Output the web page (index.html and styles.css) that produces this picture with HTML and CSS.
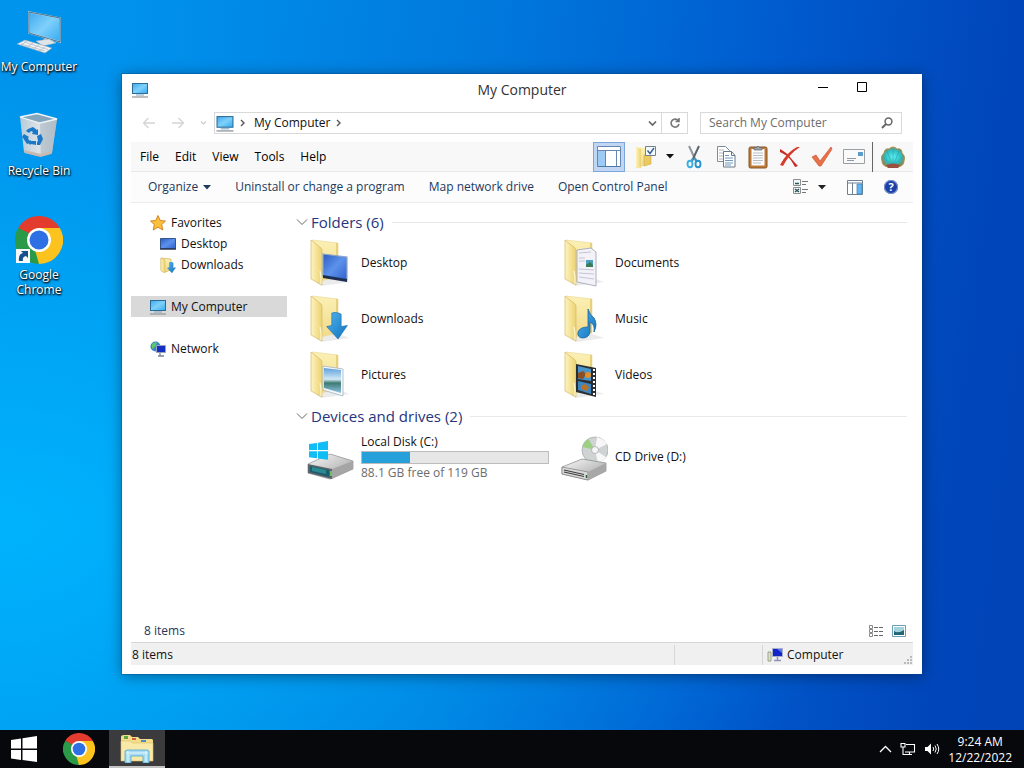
FILE: index.html
```html
<!DOCTYPE html>
<html lang="en">
<head>
  <meta charset="UTF-8">
  <title>My Computer</title>
  <meta name="viewport" content="width=device-width, initial-scale=1">
  <link rel="stylesheet" href="styles.css">
</head>
<body>
  <!-- shared icons -->
  <svg class="sprite" width="0" height="0" aria-hidden="true">
    <defs>
      <linearGradient id="g-screen" x1="0" y1="0" x2="1" y2="1"><stop offset="0" stop-color="#3fa9ee"/><stop offset=".5" stop-color="#7fd0fb"/><stop offset="1" stop-color="#35aaf0"/></linearGradient>
      <linearGradient id="g-folder" x1="0" y1="0" x2="1" y2="0"><stop offset="0" stop-color="#fdf3bd"/><stop offset="1" stop-color="#ecd273"/></linearGradient>
      <linearGradient id="g-back" x1="0" y1="0" x2="0" y2="1"><stop offset="0" stop-color="#fbf0b4"/><stop offset="1" stop-color="#f1da8a"/></linearGradient>
      <linearGradient id="g-blue" x1="0" y1="0" x2="1" y2="1"><stop offset="0" stop-color="#2c5cc0"/><stop offset=".5" stop-color="#5c92ec"/><stop offset="1" stop-color="#2f62cc"/></linearGradient>
      <linearGradient id="g-arrow" x1="0" y1="0" x2="1" y2="1"><stop offset="0" stop-color="#4fb4ee"/><stop offset="1" stop-color="#1272bd"/></linearGradient>
      <linearGradient id="g-metal" x1="0" y1="0" x2="1" y2="1"><stop offset="0" stop-color="#fafafa"/><stop offset="1" stop-color="#9c9c9c"/></linearGradient>
      <linearGradient id="g-bin" x1="0" y1="0" x2="1" y2="0"><stop offset="0" stop-color="#b5cbda"/><stop offset=".5" stop-color="#dde2e6"/><stop offset="1" stop-color="#b3c1cb"/></linearGradient>
      <linearGradient id="g-photo" x1="0" y1="0" x2="0" y2="1"><stop offset="0" stop-color="#5d9fdc"/><stop offset=".45" stop-color="#d3e9f4"/><stop offset=".6" stop-color="#3d7a72"/><stop offset="1" stop-color="#8fc4e4"/></linearGradient>
      <radialGradient id="g-shell"><stop offset="0" stop-color="#5ff0f4"/><stop offset=".65" stop-color="#2fc0c6"/><stop offset="1" stop-color="#7d8a5c"/></radialGradient>
    </defs>
    <symbol id="i-computer" viewBox="0 0 16 16">
      <rect x=".5" y="1.5" width="15" height="10" fill="url(#g-screen)" stroke="#2b6c98"/>
      <path d="M4 13h8" stroke="#7fa6bd"/>
      <path d="M0 15h16" stroke="#8f9295" stroke-width="1.2"/>
    </symbol>
    <symbol id="i-chrome" viewBox="0 0 48 48">
      <path d="M24 24 3.2 12A24 24 0 0 1 44.8 12z" fill="#e33b2e"/>
      <path d="M24 24 44.8 12A24 24 0 0 1 24 48z" fill="#fcc31e"/>
      <path d="M24 24 24 48A24 24 0 0 1 3.2 12z" fill="#2a9a48"/>
      <path d="M24 12h20.8L35 24z" fill="#fcc31e"/>
      <path d="M24 12h20.8L24 5z" fill="#e33b2e"/>
      <path d="M3.2 12 13.6 30 20 20z" fill="#2a9a48"/>
      <path d="M34.4 30 24 48l-4-14z" fill="#fcc31e"/>
      <circle cx="24" cy="24" r="12" fill="#fff"/>
      <circle cx="24" cy="24" r="9.5" fill="#2f6fe4"/>
    </symbol>
    <symbol id="i-folder" viewBox="0 0 48 48">
      <path d="M10 44 16 47 44 43 30 38z" fill="#000" opacity=".08"/>
      <path d="M6 1 32 4V38L15 42 6 38z" fill="url(#g-back)" stroke="#ead58f" stroke-width=".6"/>
      <path d="M31 4v34" stroke="#e2c76e" stroke-width="1.5"/>
      <path d="M5 1 15 9q1 1 1 3v34L5 40z" fill="url(#g-folder)" stroke="#d6ba63" stroke-width=".7"/>
      <path d="M14 32q1.500 6 1 13" fill="none" stroke="#fff7cd" stroke-width="1.200"/>
    </symbol>
    <symbol id="i-down" viewBox="0 0 20 26">
      <path d="M5 1q4-2 9 1v12l6-1-9 13L0 14l5-1z" fill="url(#g-arrow)" stroke="#1d6ea8" stroke-width=".6"/>
    </symbol>
    <symbol id="i-caret" viewBox="0 0 8 5"><path d="M0 0h8L4 4.500z" fill="currentColor"/></symbol>
    <symbol id="i-chevron" viewBox="0 0 12 8"><path d="M1 1.500 6 6.500l5-5" fill="none" stroke="#666" stroke-width="1"/></symbol>
    <symbol id="i-next" viewBox="0 0 6 8"><path d="M1 1l3 3-3 3" fill="none" stroke="#555" stroke-width="1.400"/></symbol>
  </svg>

  <main class="desktop">
    <div class="shortcuts">
      <button class="shortcut">
        <svg width="48" height="48" viewBox="0 0 48 48">
          <path d="M14 4 45 10V34L14 25z" fill="url(#g-screen)" stroke="#d5dde2" stroke-width="1.500"/>
          <path d="M14 4 45 10V34L14 25z" fill="none" stroke="#2a5876" stroke-width=".8"/>
          <path d="M29 30l6 2v3h-7z" fill="#c5ccd0"/>
          <path d="M21 33 34 31 41 35 28 38z" fill="#dfe4e7" stroke="#9fb0ba" stroke-width=".5"/>
          <path d="M2 36 10 32 37 40 30 45z" fill="#f2f4f5" stroke="#8fa5b2" stroke-width=".6"/>
          <path d="M6 36l24 7M9 34l24 7.500M12 33l-6 4M18 35l-6 4M24 37l-6 4M30 39l-6 4" stroke="#a9b5bd" stroke-width=".7"/>
        </svg>
        <span>My Computer</span>
      </button>
      <button class="shortcut">
        <svg width="48" height="48" viewBox="0 0 48 48">
          <path d="M5 5 25 10 42 7 37 41 26 44 9 40z" fill="url(#g-bin)"/>
          <path d="M25 10 42 7 37 41 26 44z" fill="#aebbc4" opacity=".6"/>
          <path d="M5 5 22 1.500 42 7 25 11z" fill="#84a5bb" stroke="#edf3f7" stroke-width="1.300"/>
          <path d="M9 38l17 4 11-3-.5 3-11 3L9.500 41z" fill="#c9b9b0"/>
          <g fill="#1a78c8">
            <path d="M13 17l5-2 4 3 1-1 0 6-6-1 1-2-2-1-2 2-3-2z"/>
            <path d="M9 22l5 3-1 1 2 5-3 1-4-6-1-1z"/>
            <path d="M15 28l1 1 5 0 0 4-5-1-1 1-2-3z"/>
            <path d="M22 24l4-2 2 5-3 6-3 0 0-3 1-1z"/>
          </g>
        </svg>
        <span>Recycle Bin</span>
      </button>
      <button class="shortcut">
        <svg width="48" height="48" viewBox="0 0 48 48">
          <use href="#i-chrome" width="48" height="48"/>
          <path d="M1 33h14v14H1z" fill="#f6f8fa"/>
          <path d="M4 45q-1-7 4-8l-2-2h7v7l-2-2q-4 1-3 5z" fill="#174f91"/>
        </svg>
        <span>Google<br>Chrome</span>
      </button>
    </div>

    <section class="window" aria-label="My Computer">
      <header class="titlebar">
        <svg width="16" height="16"><use href="#i-computer"/></svg>
        <h1>My Computer</h1>
        <div class="controls">
          <button aria-label="Minimize"><svg width="10" height="10"><path d="M0 5.500h10" stroke="#000"/></svg></button>
          <button aria-label="Maximize"><svg width="10" height="10"><path d="M.5.500h9v9h-9z" fill="none" stroke="#000"/></svg></button>
        </div>
      </header>

      <div class="address-row">
        <div class="history">
          <button aria-label="Back"><svg width="14" height="12"><path d="M13 6H2M6.500 1 1.500 6l5 5" fill="none" stroke="#d4d4d4" stroke-width="1.300"/></svg></button>
          <button aria-label="Forward"><svg width="14" height="12"><path d="M1 6h11M7.500 1l5 5-5 5" fill="none" stroke="#d4d4d4" stroke-width="1.300"/></svg></button>
          <button aria-label="Recent locations"><svg width="7" height="6"><path d="M1 1.500 3.500 4 6 1.500" fill="none" stroke="#ccc" stroke-width="1.200"/></svg></button>
        </div>
        <div class="address">
          <svg width="18" height="17"><use href="#i-computer"/></svg>
          <svg class="crumb-sep" width="6" height="8"><use href="#i-next"/></svg>
          <button class="crumb">My Computer</button>
          <svg width="6" height="8"><use href="#i-next"/></svg>
          <button class="drop" aria-label="Previous locations"><svg width="9" height="7"><path d="M1 1.500 4.500 5 8 1.500" fill="none" stroke="#666" stroke-width="1.700"/></svg></button>
          <button class="refresh" aria-label="Refresh"><svg width="12" height="12"><path d="M9.500 4A4 4 0 1 0 10 7M10 1v3.500H6.500" fill="none" stroke="#777" stroke-width="1.600"/></svg></button>
        </div>
        <label class="search">
          <input type="text" placeholder="Search My Computer" aria-label="Search My Computer">
          <svg width="12" height="12"><circle cx="7.500" cy="4.500" r="3.400" fill="none" stroke="#666" stroke-width="1.500"/><path d="M5 7 1 11" stroke="#666" stroke-width="2"/></svg>
        </label>
      </div>

      <div class="menubar">
        <nav class="menus">
          <button>File</button><button>Edit</button><button>View</button><button>Tools</button><button>Help</button>
        </nav>
        <div class="tools">
          <button class="tool active" aria-label="Navigation pane"><svg width="24" height="22"><path d="M.5.500h23v20H.5z" fill="#fff" stroke="#6688b0"/><path d="M1 4.500h22" stroke="#6688b0"/><path d="M1 5h7v15H1z" fill="#9dcbf5"/><path d="M8.500 5v15M19.500 5v15" stroke="#6688b0"/><path d="M1 20.500h22" stroke="#4a78a8"/></svg></button>
          <button class="tool folder-opts" aria-label="Folder options"><svg width="22" height="24"><path d="M1 2 12 3V20L1 23z" fill="url(#g-back)"/><path d="M9 10h7v9l-7 2z" fill="#ecca62" stroke="#cda943" stroke-width=".6"/><path d="M1 2 6 4v19l-5-1z" fill="url(#g-folder)"/><path d="M10.500 1.500h10v9h-10z" fill="#f7fafd" stroke="#728190"/><path d="M12.500 5.500 15 8.500 19 3" fill="none" stroke="#2f6290" stroke-width="1.400"/></svg></button>
          <button class="tool more" aria-label="More options"><svg width="8" height="5"><use href="#i-caret"/></svg></button>
          <button class="tool" aria-label="Cut"><svg width="16" height="24"><path d="M3 1 10 16" stroke="#8e989e" stroke-width="2"/><path d="M13 1 6 16" stroke="#5a666e" stroke-width="2"/><path d="M7 13.500 5 17M9 13.500l2 3.500" stroke="#2e9ad0" stroke-width="2"/><ellipse cx="4" cy="19" rx="2.500" ry="3.300" fill="none" stroke="#3bade0" stroke-width="1.900"/><ellipse cx="12" cy="19" rx="2.500" ry="3.300" fill="none" stroke="#2694cc" stroke-width="1.900"/></svg></button>
          <button class="tool" aria-label="Copy"><svg width="20" height="23"><path d="M1.500 1.500h8l4 4v11h-12z" fill="#fff" stroke="#7e8c9a"/><path d="M3 5h5M3 8h7M3 11h6M3 14h6" stroke="#a8b4c0"/><path d="M7.500 6.500h8l3.500 4v11.500H7.500z" fill="#fff" stroke="#66788a"/><path d="M15.500 6.500v4H19" fill="none" stroke="#66788a"/><path d="M9 10.500h4M9 13h8M9 15.500h8M9 18h8M9 20h6" stroke="#6f97c4"/></svg></button>
          <button class="tool" aria-label="Paste"><svg width="20" height="24"><rect x="1" y="2" width="18" height="21" rx="1.500" fill="#bd7b38" stroke="#8a5524"/><path d="M3.500 4h13v16.500h-13z" fill="#fdfdfd"/><path d="M5 8h10M5 10.500h10M5 13h10M5 15.500h10M5 18h8" stroke="#b6bdc4"/><path d="M6 5V2.500h2.500q1.500-3 3 0H14V5z" fill="#9da3a8" stroke="#5d6367" stroke-width=".7"/></svg></button>
          <button class="tool" aria-label="Delete"><svg width="22" height="22"><path d="M1 3q7 4 10 8t8 9l-3 1q-5-9-8-11T1 6z" fill="#c92a20"/><path d="M21 1Q10 8 4 20l-3-1Q8 6 18 1z" fill="#d83a2a"/></svg></button>
          <button class="tool" aria-label="Properties"><svg width="22" height="22"><path d="M1 11 5 9l4 6L20 1l1 2L10 20H8z" fill="#e8704a" stroke="#cf5635" stroke-width=".7"/></svg></button>
          <button class="tool" aria-label="E-mail"><svg width="22" height="15"><path d="M.5.500h21v14H.5z" fill="#fafafa" stroke="#9a9fa4"/><path d="M15 3h5v4h-5z" fill="#5c9ccc"/><path d="M4 9.500h9M4 11.500h7" stroke="#909aa4"/></svg></button>
          <button class="tool shell" aria-label="Shell"><svg width="24" height="22"><path d="M7 21Q1 20 1 15-1 10 3 7 4 2 8 3q4-4 8 0 5-1 5 4 4 3 2 8 0 5-6 6z" fill="url(#g-shell)" stroke="#b58a4c" stroke-width=".9"/><path d="M12 18V3M11 18 6 5M13 18l5-13M10 18 2 11M14 18l8-7" stroke="#2aa4a8" stroke-width=".6"/><path d="M5 19q7-3 14 0l-2 3H7z" fill="#9a5040"/></svg></button>
        </div>
      </div>

      <div class="commandbar">
        <button>Organize <svg width="8" height="5"><use href="#i-caret"/></svg></button>
        <button>Uninstall or change a program</button>
        <button>Map network drive</button>
        <button>Open Control Panel</button>
        <div class="view-tools">
          <button aria-label="Change your view"><svg width="17" height="16"><path d="M1.500.500h7v6h-7zM1.500 8.500h7v6h-7z" fill="#f4f8f4" stroke="#8a8f94"/><path d="M3 4.500h4M3 10l4 3M7 10l-4 3" stroke="#31565e" stroke-width="1.500" fill="none"/><path d="M10 2.500h6M10 5.500h4M10 10.500h6M10 13.500h4" stroke="#777"/></svg></button>
          <button aria-label="More views"><svg width="8" height="5"><use href="#i-caret"/></svg></button>
          <button class="preview" aria-label="Preview pane"><svg width="16" height="15"><path d="M.5.500h15v14H.5z" fill="#fff" stroke="#6c8294"/><path d="M1 3h14M5.500 3v11" stroke="#6c8294"/><path d="M10 4h5v10h-5z" fill="#64b4f2" stroke="#3d82ba" stroke-width=".7"/></svg></button>
          <button class="help" aria-label="Help">?</button>
        </div>
      </div>

      <div class="content">
        <nav class="sidebar">
          <button class="place"><svg width="16" height="16"><path d="M8 .5 10.300 5.500 15.500 6 11.700 9.600 12.800 15 8 12.200 3.200 15 4.300 9.600.500 6 5.700 5.500z" fill="#f9c03e" stroke="#cf7c1e" stroke-width=".9"/></svg>Favorites</button>
          <button class="place child"><svg width="16" height="16"><path d="M.5 2.500h15v10H.5z" fill="url(#g-blue)" stroke="#35568c"/><path d="M0 13h16" stroke="#27364e" stroke-width="1.500"/></svg>Desktop</button>
          <button class="place child"><svg width="16" height="16"><path d="M1 1 11 2V13L5 15 1 13z" fill="url(#g-back)" stroke="#d3b454" stroke-width=".7"/><path d="M1 1 5 3v13l-4-2z" fill="url(#g-folder)" stroke="#cfb154" stroke-width=".5"/><use href="#i-down" x="7" y="5" width="9" height="11"/></svg>Downloads</button>
          <button class="place spaced selected"><svg width="16" height="16"><use href="#i-computer"/></svg>My Computer</button>
          <button class="place spaced"><svg width="16" height="16"><circle cx="5.500" cy="5.500" r="5" fill="#3a86cc"/><path d="M2 3q3-3 5-1L5 6 2 8zM7 5l3-1v4z" fill="#5cc66a"/><path d="M6.500 4.500h9v7h-9z" fill="#1430c4" stroke="#98a4ba"/><path d="M10 12v3M8 15h6" stroke="#7a8498" stroke-width="1.300"/></svg>Network</button>
        </nav>

        <div class="listing">
          <section>
            <h2><svg width="12" height="8"><use href="#i-chevron"/></svg>Folders (6)</h2>
            <div class="items">
              <button class="item"><svg width="48" height="48"><use href="#i-folder"/><path d="M17 15 41 18V41L17 37z" fill="url(#g-blue)" stroke="#8fa5c4" stroke-width="1.200"/><path d="M17 36l24 4v3l-24-4z" fill="#1c2f50"/></svg>Desktop</button>
              <button class="item"><svg width="48" height="48"><use href="#i-folder"/><path d="M17 11 31 9l5 4V47L17 43z" fill="#f3f2f8" stroke="#a5a8bb" stroke-width=".9"/><path d="M19 14l12-1M19 19h6M19 22h6M19 30l15 1M19 34l15 1M19 38l15 2" stroke="#c4c6d8" stroke-width="1"/><path d="M26 21h7v7h-7z" fill="#4a9fc0"/><path d="M26 26l4-3 3 3v2h-7z" fill="#3a7a54"/></svg>Documents</button>
              <button class="item"><svg width="48" height="48"><use href="#i-folder"/><use href="#i-down" x="20" y="17" width="22" height="27"/></svg>Downloads</button>
              <button class="item"><svg width="48" height="48"><use href="#i-folder"/><path d="M28 14q2 6 6 9 4 6 0 14 1-8-4-10l0 10q-1 6-8 6-5-1-4-6 2-5 10-5z" fill="url(#g-arrow)" stroke="#1b63a0" stroke-width=".8"/></svg>Music</button>
              <button class="item"><svg width="48" height="48"><use href="#i-folder"/><path d="M17 15 37 18V45L17 39z" fill="#f4f8fb" stroke="#a3b5c2" stroke-width=".8"/><path d="M18 17 35 19V42L18 37z" fill="url(#g-photo)"/></svg>Pictures</button>
              <button class="item"><svg width="48" height="48"><use href="#i-folder"/><path d="M16 13 36 17V46L16 41z" fill="#2a2e32"/><path d="M18 15 31 18V30L18 28z" fill="#4a94cc"/><path d="M18 30 31 33V43L18 39z" fill="#3f86c0"/><path d="M18 22l5-2 3 3-3 5-5-1z" fill="#8a4f22"/><circle cx="28" cy="24" r="3" fill="#e0912e"/><path d="M21 35l4-2 4 3-2 4-6-2z" fill="#b8732a"/><path d="M34 18v27" stroke="#fff" stroke-width="2" stroke-dasharray="2 2"/></svg>Videos</button>
            </div>
          </section>
          <section>
            <h2><svg width="12" height="8"><use href="#i-chevron"/></svg>Devices and drives (2)</h2>
            <div class="items">
              <button class="item">
                <svg width="48" height="48"><path d="M2 31 24 21l23 7v8L24 46 2 40z" fill="url(#g-metal)" stroke="#8b8b8b" stroke-width=".7"/><path d="M2 31 26 36V46L2 40z" fill="#5b6468"/><path d="M4 33l19 4v7L4 39z" fill="#1f5c70"/><path d="M6 34l14 3v4L6 38z" fill="#2b8b90"/><path d="M25 38v5" stroke="#6fe06a" stroke-width="1.500"/><path d="M26 36 47 28v8l-21 10z" fill="#a5a5a5"/><path d="M3 11l8-1v7H3zM12 9.700 22 8v9H12zM3 18.300h8v7l-8-1zM12 18.300h10v8.500L12 25.500z" fill="#10bdf5"/></svg>
                <span class="drive">
                  <span>Local Disk (C:)</span>
                  <progress value="31" max="119" aria-label="Used space on C:"></progress>
                  <span class="free">88.1 GB free of 119 GB</span>
                </span>
              </button>
              <button class="item"><svg width="48" height="48"><circle cx="35" cy="17" r="13" fill="#d0d3d3" stroke="#a9adad" stroke-width=".8"/><path d="M35 17 22.500 14q2-6 6-8z" fill="#9cd083"/><path d="M35 17 37 4q7 2 10 7zM35 17l11 7q-3 5-8 6z" fill="#f7f7f7"/><circle cx="35" cy="17" r="3.500" fill="#f5f6f6" stroke="#aaa" stroke-width=".8"/><path d="M2 34 22 26l24 4v8L28 47 2 41z" fill="url(#g-metal)" stroke="#858585" stroke-width=".7"/><path d="M2 34 28 39v8L2 41z" fill="#d9d9d9" stroke="#7c7c7c" stroke-width=".7"/><path d="M4 37l20 4.500M4 39l20 4.500" stroke="#3d3d3d" stroke-width="1.200"/><path d="M28 39 46 30v8l-18 9z" fill="#a8a8a8"/><path d="M26.500 42v3" stroke="#2c5e35" stroke-width="1.500"/></svg>CD Drive (D:)</button>
            </div>
          </section>
        </div>
      </div>

      <div class="details">
        <span>8 items</span>
        <div class="modes">
          <button aria-label="Details view"><svg width="16" height="13"><path d="M1.500.500h3v3h-3zM1.500 4.500h3v3h-3zM1.500 8.500h3v3h-3z" fill="none" stroke="#888"/><path d="M6 2.500h4M11 2.500h4M6 6.500h4M11 6.500h4M6 10.500h4M11 10.500h4" stroke="#666"/></svg></button>
          <button aria-label="Large icons"><svg width="14" height="12"><path d="M.5.500h13v11H.5z" fill="#fff" stroke="#6a9fb5"/><path d="M2 2h10v8H2z" fill="#a3d3dd"/><path d="M2 6q4 3 10-1v5H2z" fill="#256674"/></svg></button>
        </div>
      </div>

      <footer class="statusbar">
        <span class="count">8 items</span>
        <span class="blank"></span>
        <span class="zone"><svg width="16" height="16"><path d="M1 5h3v9H1z" fill="#dfe3c9" stroke="#7c846a" stroke-width=".7"/><path d="M5.500 1.500h10v8h-10z" fill="#1126c6" stroke="#a8aecb"/><path d="M10 2l5 0v4z" fill="#5b76f0"/><path d="M10.500 10v3M7 13.500h7" stroke="#8d93b4" stroke-width="1.500"/></svg>Computer</span>
        <svg class="grip" width="9" height="9"><path d="M6 0h2v2H6zM3 3h2v2H3zM6 3h2v2H6zM0 6h2v2H0zM3 6h2v2H3zM6 6h2v2H6z" fill="#bcbcbc"/></svg>
      </footer>
    </section>
  </main>

  <footer class="taskbar">
    <button class="task start" aria-label="Start"><svg width="28" height="26"><path d="M1 4l10-1.500v10H1zM12.500 2.300 27 0v12.500H12.500zM1 14h10v10L1 22.500zM12.500 14H27v12l-14.500-2z" fill="#fff"/></svg></button>
    <button class="task" aria-label="Google Chrome"><svg width="32" height="32"><use href="#i-chrome"/></svg></button>
    <button class="task open" aria-label="File Explorer"><svg width="34" height="30"><path d="M1 4q0-2 3-2h6l2 2h6l2 2h12q1 0 1 2v20H1z" fill="#f3dc8a"/><path d="M4 3h4v3H4z" fill="#5fa53f"/><path d="M12 5h4v2h-4z" fill="#d0633c"/><path d="M21 7h5v2h-5z" fill="#4a8cc0"/><path d="M1 8h9l2 2h21v18H1z" fill="#f8e9a8" stroke="#dcc06a" stroke-width=".6"/><path d="M5 18q1-1 3-1h18q3 0 3 1v12h-6v-7H11v7H5z" fill="#a5dcf4" stroke="#4ea5d0" stroke-width=".8"/><path d="M6 20h22M8 18v11M26 18v11" stroke="#e4f7fd"/></svg></button>
    <div class="tray">
      <button aria-label="Show hidden icons"><svg width="13" height="8"><path d="M1 7l5.500-5.500L12 7" fill="none" stroke="#fff" stroke-width="1.300"/></svg></button>
      <button aria-label="Network"><svg width="16" height="14"><path d="M1 1.500h4v3.500H1zM3 5v7.500h4M6 2.500h8.500v7.500H5M9.500 10v2.500M7 12.500h5" fill="none" stroke="#fff" stroke-width="1.100"/></svg></button>
      <button aria-label="Volume"><svg width="16" height="14"><path d="M1 5h2.500L7 1.500v11L3.500 9H1z" fill="#fff"/><path d="M9 5q1.500 2 0 4M11 3.500q2.500 3.500 0 7M13 2q3.500 5 0 10" fill="none" stroke="#fff"/></svg></button>
      <button class="clock"><span>9:24 AM</span><span>12/22/2022</span></button>
    </div>
  </footer>
</body>
</html>
```

FILE: styles.css
```css
:root {
  --text: #111;
  --link: #1e395b;
  --heading: #26357d;
  --line: #d9d9d9;
}
*, *::before, *::after { box-sizing: border-box; }
body {
  margin: 0;
  height: 100vh;
  display: flex;
  flex-direction: column;
  overflow: hidden;
  font-family: 'Segoe UI', 'Open Sans', sans-serif;
  font-size: 12px;
  line-height: 16px;
  color: var(--text);
}
button {
  display: flex;
  align-items: center;
  padding: 0;
  border: 0;
  background: none;
  font: inherit;
  color: inherit;
  white-space: nowrap;
}
svg { display: block; flex: none; }
.sprite { position: absolute; }

/* desktop */
.desktop {
  position: relative;
  flex: 1;
  min-height: 0;
  background:
    radial-gradient(ellipse at 0 72%, rgba(0,184,255,0.85), rgba(0,150,240,0) 60%),
    linear-gradient(97deg, #0094ec 0%, #0092ec 12%, #0078dc 45%, #005ccf 70%, #0047bb 90%, #0043b6 100%);
}
.shortcuts {
  display: flex;
  flex-direction: column;
  width: 78px;
  padding-top: 8px;
}
.shortcut {
  flex-direction: column;
  gap: 3px;
  height: 104px;
  line-height: 15px;
  color: #fff;
  text-shadow: 0 1px 2px #000, 1px 1px 2px #000;
}

/* window */
.window {
  position: absolute;
  top: 74px;
  right: 102px;
  bottom: 56px;
  left: 122px;
  display: flex;
  flex-direction: column;
  padding: 0 9px 9px;
  background: #fff;
  box-shadow: 0 0 0 1px rgba(0,60,130,0.3), 0 2px 14px rgba(0,0,0,0.4);
}
.titlebar {
  display: grid;
  grid-template-columns: 1fr auto 1fr;
  align-items: center;
  height: 32px;
  padding: 0 1px;
}
.titlebar h1 {
  margin: 0;
  font-size: 14px;
  font-weight: normal;
  color: #333;
}
.controls {
  display: flex;
  justify-content: flex-end;
  gap: 29px;
  padding: 0 45px 6px 0;
}
.address-row {
  display: flex;
  align-items: center;
  height: 34px;
  padding: 0 11px;
}
.history {
  display: flex;
  align-items: center;
  gap: 15px;
  width: 72px;
}
.address, .search {
  display: flex;
  align-items: center;
  height: 22px;
  border: 1px solid var(--line);
}
.address {
  flex: 1;
  margin-right: 12px;
  padding-left: 1px;
}
.crumb-sep { margin: 0 8px 0 6px; }
.crumb { margin-right: 6px; }
.drop { margin: 0 4px 0 auto; }
.refresh {
  justify-content: center;
  width: 26px;
  height: 20px;
  border-left: 1px solid var(--line);
}
.search {
  width: 202px;
  padding: 0 8px;
}
.search input {
  flex: 1;
  min-width: 0;
  padding: 0;
  border: 0;
  outline: 0;
  background: none;
  font: inherit;
}
.search input::placeholder { color: #6d6d6d; }

/* bars */
.menubar {
  display: flex;
  align-items: center;
  justify-content: space-between;
  height: 30px;
  margin-top: 2px;
  background: #f8f8f9;
  border-bottom: 1px solid #e8e9ea;
}
.menus { display: flex; padding-left: 1px; }
.menus button { padding: 0 8px; color: #000; }
.tools { display: flex; }
.tool {
  justify-content: center;
  width: 32px;
  height: 30px;
}
.tool.active {
  background: #c0d6f2;
  border: 1px solid #7da6dc;
}
.folder-opts { margin-left: 5px; }
.more { width: 16px; }
.shell {
  width: 41px;
  margin-left: 2px;
  border-left: 1px solid #666;
}
.commandbar {
  display: flex;
  align-items: center;
  gap: 24px;
  height: 31px;
  padding: 0 15px 0 17px;
  background: #fcfcfd;
  border-bottom: 1px solid #ececec;
  color: var(--link);
}
.commandbar button { gap: 5px; }
.view-tools {
  display: flex;
  align-items: center;
  gap: 9px;
  margin-left: auto;
  color: #222;
}
.preview { margin: 0 12px; }
.commandbar .help {
  justify-content: center;
  width: 14px;
  height: 14px;
  border-radius: 50%;
  background: #1c3fa8;
  box-shadow: inset 0 0 0 1px #8094cc;
  color: #fff;
  font-size: 11px;
  font-weight: bold;
}

/* content */
.content {
  display: flex;
  flex: 1;
  min-height: 0;
}
.sidebar {
  width: 156px;
  padding-top: 9px;
}
.place {
  gap: 5px;
  width: 100%;
  height: 21px;
  padding-left: 19px;
}
.place.child { padding-left: 29px; }
.place.spaced { margin-top: 21px; }
.place.selected { background: #d9d9d9; }
.listing {
  flex: 1;
  min-width: 0;
  padding: 6px 6px 0 9px;
  overflow: hidden;
}
.listing h2 {
  display: flex;
  align-items: center;
  gap: 3px;
  height: 26px;
  margin: 0;
  font-size: 15px;
  font-weight: normal;
  color: var(--heading);
}
.listing h2::after {
  content: '';
  flex: 1;
  height: 1px;
  margin-left: 5px;
  background: #e8e8e8;
}
.items {
  display: grid;
  grid-template-columns: repeat(auto-fill, 254px);
  padding-left: 10px;
}
.item {
  gap: 7px;
  height: 56px;
  text-align: left;
}
.drive {
  display: flex;
  flex-direction: column;
  gap: 1px;
}
.drive progress {
  appearance: none;
  width: 188px;
  height: 13px;
  border: 1px solid #bcbcbc;
  background: #e6e6e6;
}
.drive progress::-webkit-progress-bar { background: #e6e6e6; }
.drive progress::-webkit-progress-value { background: #26a0da; }
.free { color: #6d6d6d; }

/* bottom of the window */
.details {
  display: flex;
  align-items: center;
  justify-content: space-between;
  height: 22px;
  padding: 0 7px 0 13px;
  line-height: 18px;
  color: var(--link);
}
.modes { display: flex; align-items: center; gap: 8px; }
.statusbar {
  display: flex;
  align-items: center;
  height: 23px;
  padding-top: 2px;
  border-top: 1px solid #d7d7d7;
  background: #f0f0f0;
}
.statusbar .count { flex: 1; padding-left: 1px; }
.statusbar .blank, .statusbar .zone {
  align-self: stretch;
  border-left: 1px solid #d7d7d7;
}
.statusbar .blank { width: 88px; }
.statusbar .zone {
  display: flex;
  align-items: center;
  gap: 4px;
  width: 142px;
  padding-left: 4px;
}
.grip { align-self: flex-end; }

/* taskbar */
.taskbar {
  display: flex;
  justify-content: space-between;
  height: 38px;
  background: #06080b;
  color: #fff;
}
.task {
  justify-content: center;
  width: 61px;
}
.start { width: 48px; }
.open {
  width: 56px;
  background: #3b3b3d;
  border-bottom: 2px solid #c3c3c3;
}
.tray {
  display: flex;
  align-items: center;
  gap: 8px;
  margin-left: auto;
  padding-right: 12px;
}
.clock {
  flex-direction: column;
  padding-top: 2px;
}
```
